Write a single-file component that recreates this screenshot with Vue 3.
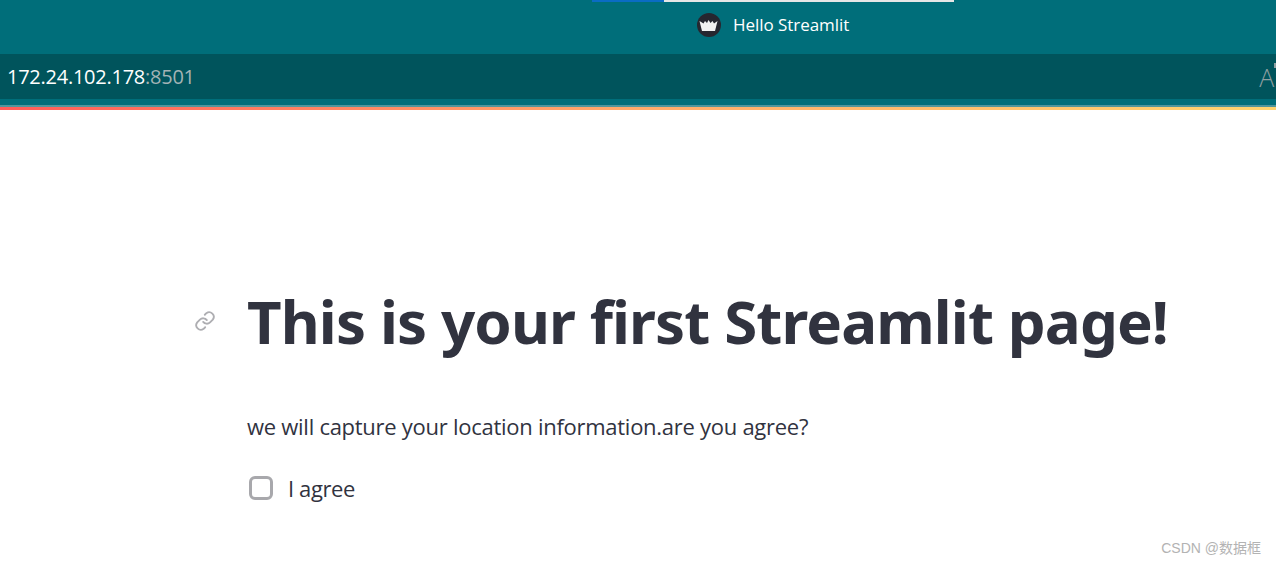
<script setup>
const title = 'This is your first Streamlit page!'
</script>

<template>
  <div class="page">
    <header class="chrome">
      <div class="tabbar">
        <div class="tab">
          <div class="tab-line"><span class="line-blue"></span><span class="line-grey"></span></div>
          <div class="tab-title">
            <svg class="favicon" width="24" height="24" viewBox="0 0 24 24">
              <circle cx="12" cy="12" r="12" fill="#262730" />
              <path d="M2.5 8 L6.5 10.5 L8 8 L10 10 L11.5 7 L13.5 10 L15.5 8 L17 10.5 L20.5 8 L18 18 L5 18 Z" fill="#f2f2f2" />
            </svg>
            <span>Hello Streamlit</span>
          </div>
        </div>
      </div>
      <div class="urlbar">
        <span class="url"><span class="host">172.24.102.178</span><span class="port">:8501</span></span>
        <span class="aa">A</span>
        <span class="aa-mark"></span>
      </div>
      <div class="under"></div>
      <div class="under-light"></div>
      <div class="rainbow"></div>
    </header>

    <main class="content">
      <div class="heading-row">
        <svg class="anchor" width="22" height="22" viewBox="0 0 24 24" fill="none" stroke="#aeaeb2" stroke-width="2" stroke-linecap="round" stroke-linejoin="round">
          <path d="M10 13a5 5 0 0 0 7.5.5l3-3a5 5 0 0 0-7-7l-1.7 1.7" />
          <path d="M14 11a5 5 0 0 0-7.5-.5l-3 3a5 5 0 0 0 7 7l1.7-1.7" />
        </svg>
        <h1>{{ title }}</h1>
      </div>
      <p class="lead">we will capture your location information.are you agree?</p>
      <label class="check">
        <span class="box"></span>
        <span class="check-label">I agree</span>
      </label>
    </main>

    <footer class="mark">CSDN @数据框</footer>
  </div>
</template>

<style>
html, body { margin: 0; background: #fff; overflow: hidden; }
</style>

<style scoped>
.page {
  width: 1276px;
  height: 565px;
  display: flex;
  flex-direction: column;
  position: relative;
  overflow: hidden;
  background: #fff;
  font-family: "Open Sans", "Noto Sans", sans-serif;
}
.chrome { flex: none; display: flex; flex-direction: column; }
.tabbar { height: 54px; background: #006e7a; padding-left: 592px; box-sizing: border-box; }
.tab { width: 362px; }
.tab-line { display: flex; height: 2px; }
.line-blue { width: 72px; background: #0a6cc4; }
.line-grey { flex: 1; background: #e6e6e6; }
.tab-title {
  display: flex;
  align-items: center;
  gap: 12px;
  padding: 10px 0 0 105px;
  color: #fff;
  font-size: 17px;
  letter-spacing: -0.05px;
  line-height: 26px;
}
.urlbar {
  height: 45px;
  background: #00545c;
  display: flex;
  align-items: center;
  padding-left: 7px;
  overflow: hidden;
  font-size: 20px;
  letter-spacing: -0.25px;
}
.url { flex: 1; }
.host { color: #fff; }
.port { color: #a3b3b5; }
.aa { color: #8f9fa1; font-size: 25px; font-weight: 300; line-height: 32px; }
.aa-mark { width: 2px; height: 5px; margin: -22px 0 0 0; background: #8f9fa1; }
.under { height: 6px; background: #006e7a; }
.under-light { height: 2px; background: #4f959c; }
.rainbow { height: 3px; background: linear-gradient(90deg, #ff5c58, #ffab6b 50%, #ffd46f); }
.content { padding: 173px 0 0 194px; }
.heading-row { display: flex; align-items: center; gap: 31px; height: 76px; }
.anchor { flex: none; }
h1 {
  margin: 0;
  font-family: "Noto Sans", "Open Sans", sans-serif;
  font-size: 60px;
  font-weight: 700;
  line-height: 76px;
  color: #31333f;
  white-space: nowrap;
  letter-spacing: -0.88px;
}
.lead {
  margin: 51px 0 0 53px;
  font-size: 22px;
  line-height: 32px;
  color: #31333f;
  letter-spacing: -0.27px;
}
.check {
  display: flex;
  align-items: center;
  margin: 30px 0 0 55px;
  color: #31333f;
}
.box {
  width: 24px;
  height: 24px;
  box-sizing: border-box;
  border: 3px solid #a8a8ac;
  border-radius: 6px;
  background: #fff;
}
.check-label { margin-left: 15px; font-size: 22px; letter-spacing: -0.4px; line-height: 32px; }
.mark {
  position: absolute;
  right: 15px;
  bottom: 8px;
  font-family: "Liberation Sans", "Noto Sans CJK SC", sans-serif;
  font-size: 14px;
  line-height: 18px;
  color: #b3b3b3;
}
</style>
